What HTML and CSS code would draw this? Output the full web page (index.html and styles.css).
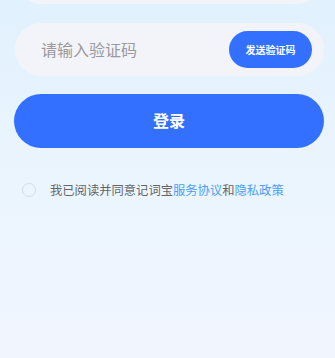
FILE: index.html
```html
<!DOCTYPE html>
<html lang="zh-CN">
    <head>
        <meta charset="UTF-8">
        <meta name="viewport" content="width=device-width, initial-scale=1.0">
        <title>登录</title>
        <link rel="stylesheet" href="styles.css">
    </head>
    <body>
        <div class="form">
            <div class="field">
                <input class="field-input" type="text" placeholder="请输入手机号">
            </div>
            <div class="field">
                <input class="field-input" type="text" placeholder="请输入验证码">
                <button class="code-btn">发送验证码</button>
            </div>
            <button class="login-btn">登录</button>
            <label class="agree">
                <span class="check"></span>
                <span class="agree-text">我已阅读并同意记词宝<a class="link">服务协议</a>和<a class="link">隐私政策</a></span>
            </label>
        </div>
    </body>
</html>
```

FILE: styles.css
```css
html, body {
    height: 100%;
}
body {
    margin: 0;
    font-family: "Noto Sans CJK SC", "Noto Sans", sans-serif;
    background: linear-gradient(180deg, #e1f1fd 0%, #ebf5fe 50%, #f1f5fe 100%);
    overflow: hidden;
}
.form {
    margin-top: -49px;
    padding: 0 11px 0 15px;
    display: flex;
    flex-direction: column;
}
.field {
    height: 53px;
    border-radius: 27px;
    background-color: #f3f4f9;
    display: flex;
    align-items: center;
    padding: 0 12px 0 26px;
    margin-bottom: 19px;
}
.field-input {
    flex: 1;
    min-width: 0;
    border: none;
    background: transparent;
    outline: none;
    font-family: inherit;
    font-size: 16px;
    color: #333;
    padding: 0 0 2px 0;
}
.field-input::placeholder {
    color: #9a9a9e;
}
.code-btn {
    width: 83px;
    height: 37px;
    border: none;
    border-radius: 19px;
    background-color: #3370ff;
    color: #fff;
    font-family: inherit;
    font-size: 10px;
    font-weight: bold;
    padding: 0;
}
.login-btn {
    height: 54px;
    margin: -1px 0 0 -1px;
    border: none;
    border-radius: 27px;
    background-color: #3370ff;
    color: #fff;
    font-family: inherit;
    font-size: 16px;
    font-weight: bold;
    padding: 0 0 2px 0;
}
.agree {
    display: flex;
    align-items: center;
    margin-top: 33px;
    padding-left: 7px;
    font-size: 12.3px;
    color: #666;
}
.check {
    width: 12px;
    height: 12px;
    border: 1px solid #d8dce2;
    border-radius: 50%;
    margin-right: 14px;
}
.link {
    color: #4a9ef8;
}
```
